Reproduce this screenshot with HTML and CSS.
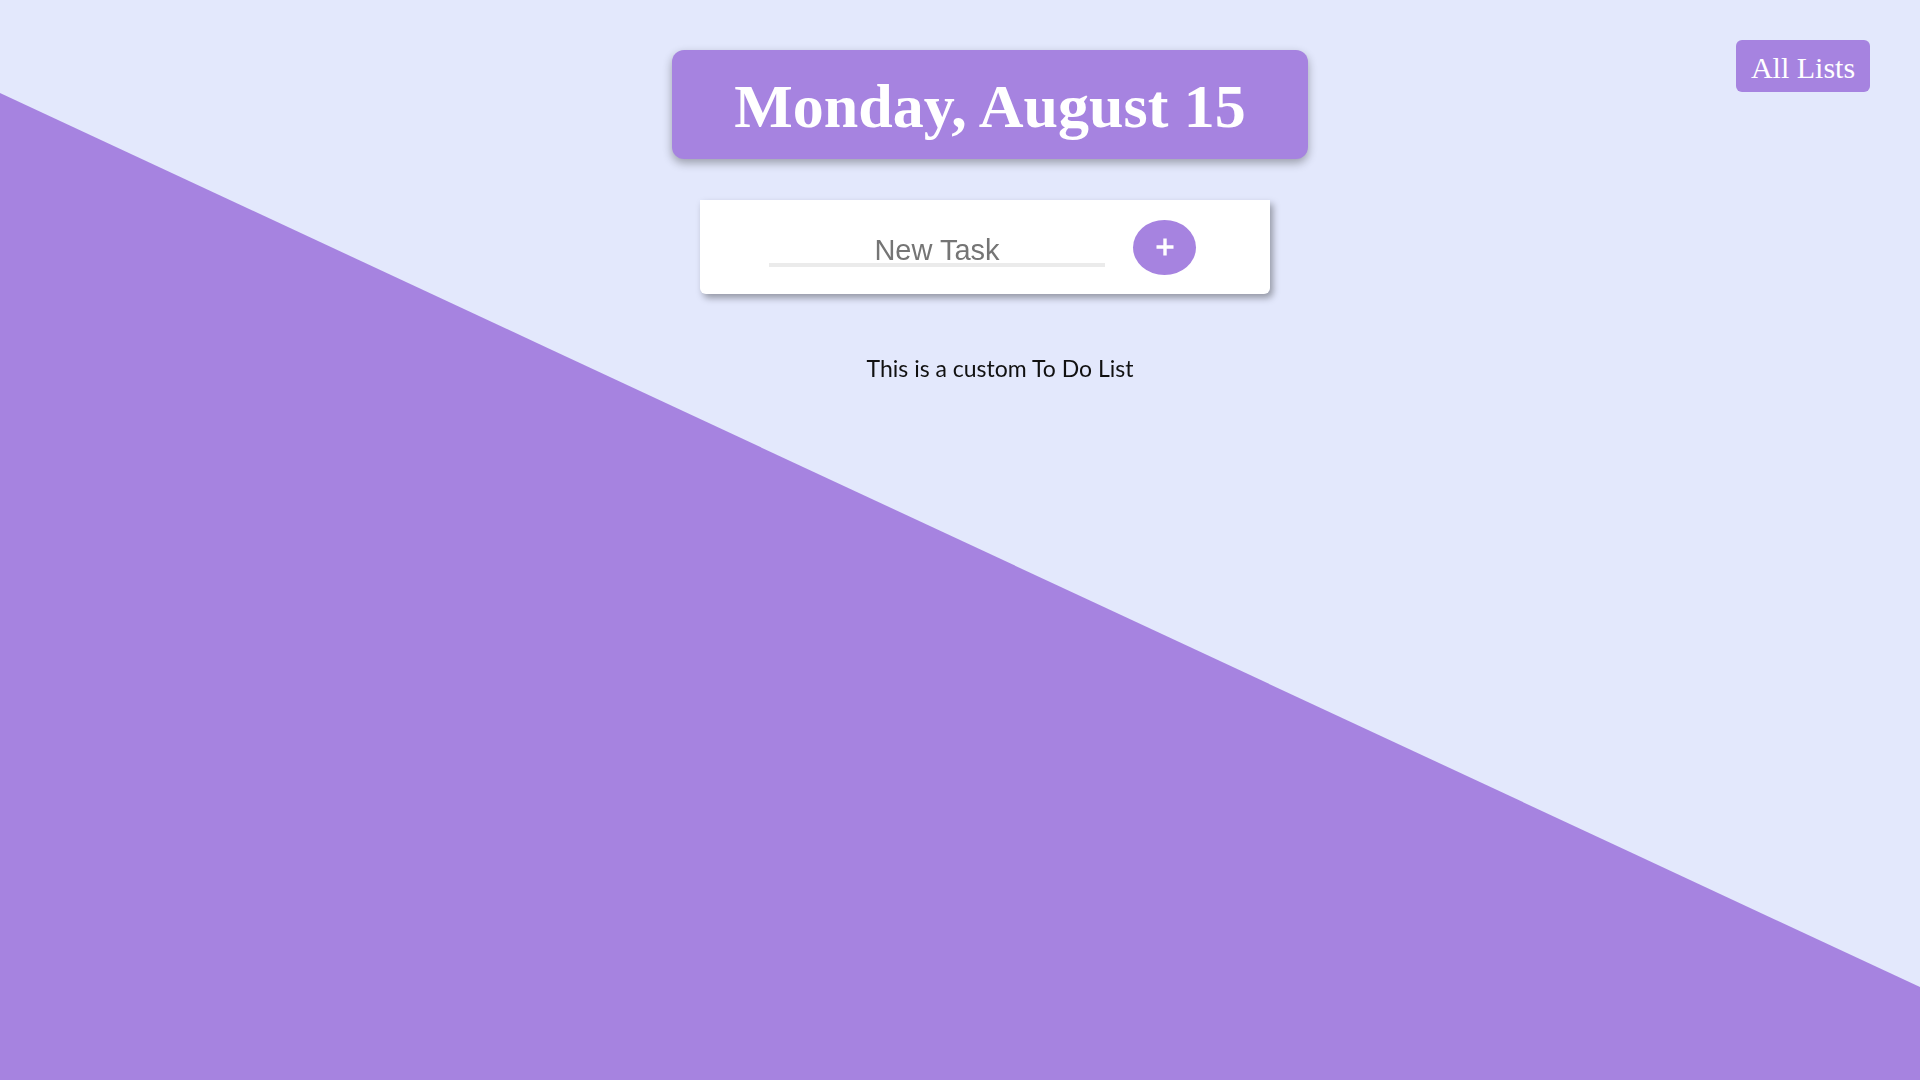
FILE: index.html
```html
<!DOCTYPE html>
<html lang="en">
<head>
<meta charset="utf-8">
<title>To Do</title>
<link rel="stylesheet" href="styles.css">
</head>
<body>
  <div class="backdrop"></div>
  <a class="all-lists" href="#">All Lists</a>
  <main class="page">
    <h1 class="date-card">Monday, August 15</h1>
    <form class="task-card">
      <input class="task-input" type="text" placeholder="New Task">
      <button class="add-btn" type="button" aria-label="Add">
        <svg width="20" height="20" viewBox="0 0 20 20"><path d="M10 1.5v17M1.5 10h17" stroke="#fff" stroke-width="3.4" fill="none"/></svg>
      </button>
    </form>
    <p class="note">This is a custom To Do List</p>
  </main>
</body>
</html>
```
FILE: styles.css
```css
html {
  background: #e3e8fc;
}
body {
  margin: 0;
  min-height: 1080px;
  font-family: "Liberation Sans", Arial, sans-serif;
}
.backdrop {
  position: fixed;
  inset: 0;
  z-index: -1;
  background: #a683e0;
  clip-path: polygon(0 93px, 100% 987px, 100% 100%, 0 100%);
}
.all-lists {
  position: absolute;
  top: 40px;
  right: 50px;
  width: 134px;
  height: 52px;
  box-sizing: border-box;
  padding-top: 3px;
  display: flex;
  align-items: center;
  justify-content: center;
  background: #a683e0;
  border-radius: 6px;
  color: #fff;
  text-decoration: none;
  font-family: "Liberation Serif", "Times New Roman", serif;
  font-size: 30px;
}
.page {
  display: flex;
  flex-direction: column;
  align-items: center;
  padding: 50px 0 0 60px;
}
.date-card {
  margin: 0;
  width: 636px;
  height: 109px;
  box-sizing: border-box;
  padding-top: 3px;
  display: flex;
  align-items: center;
  justify-content: center;
  background: #a683e0;
  border-radius: 12px;
  box-shadow: 0 4px 10px rgba(0, 0, 0, 0.32);
  color: #fff;
  font-family: "Liberation Serif", "Times New Roman", serif;
  font-weight: bold;
  font-size: 62px;
}
.task-card {
  margin: 41px 10px 0 0;
  width: 570px;
  height: 94px;
  box-sizing: border-box;
  padding-left: 69px;
  display: flex;
  align-items: center;
  gap: 28px;
  background: #fff;
  border-radius: 0 0 6px 6px;
  box-shadow: 3px 4px 7px rgba(0, 0, 0, 0.35);
}
.task-input {
  width: 336px;
  height: 40px;
  box-sizing: border-box;
  padding: 10px 0 0;
  border: none;
  border-bottom: 4px solid #ebebeb;
  outline: none;
  text-align: center;
  font-family: "Liberation Sans", Arial, sans-serif;
  font-size: 29px;
  color: #333;
  background: transparent;
}
.task-input::placeholder {
  color: #757575;
}
.add-btn {
  width: 63px;
  height: 55px;
  padding: 0;
  border: none;
  border-radius: 50%;
  background: #a683e0;
  display: flex;
  align-items: center;
  justify-content: center;
  cursor: pointer;
}
.note {
  margin: 60px 0 0 20px;
  font-family: Lato, "Open Sans", sans-serif;
  font-size: 23px;
  color: #111;
}
```
